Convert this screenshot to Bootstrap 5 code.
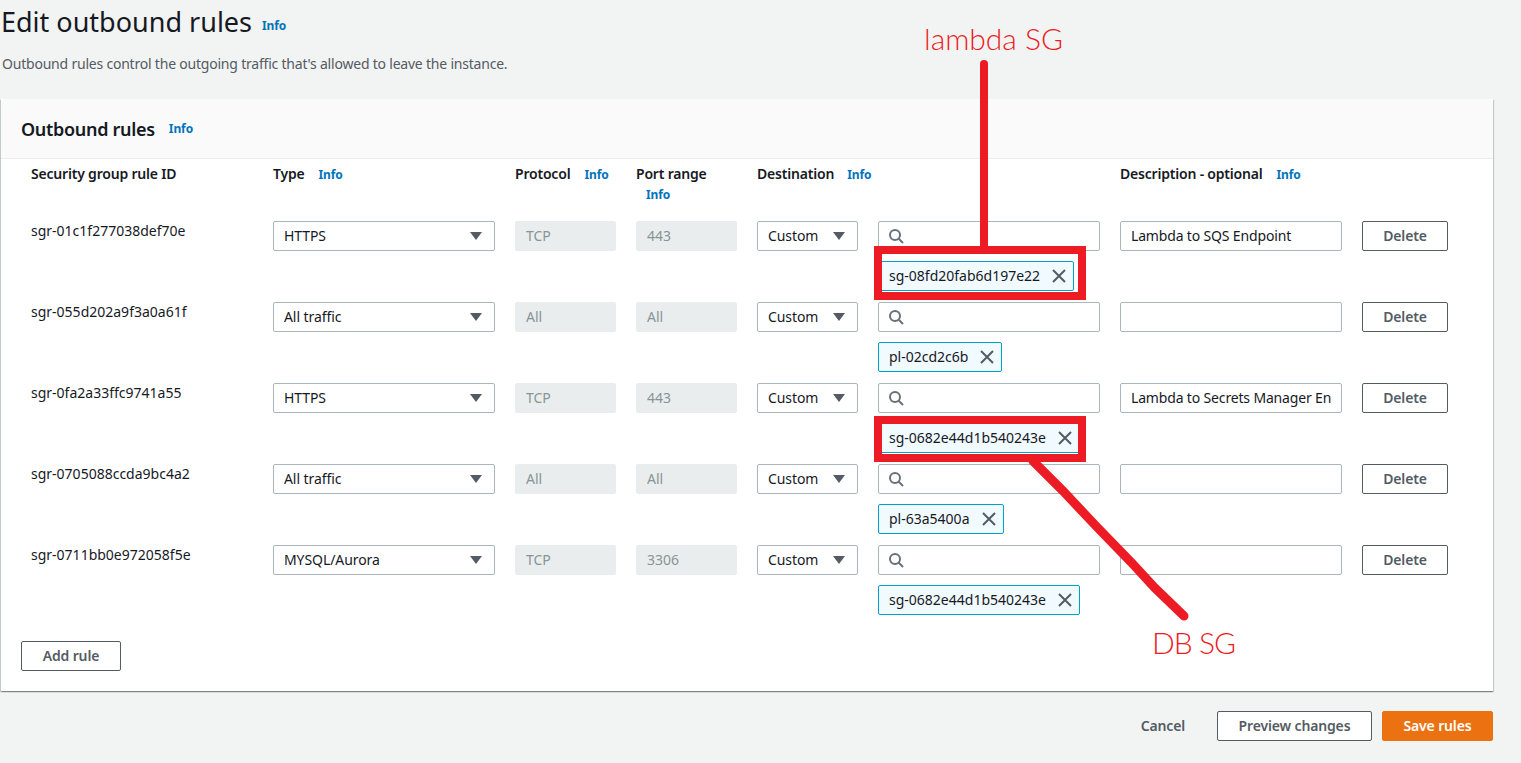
<!doctype html>
<html lang="en">
<head>
  <meta charset="utf-8">
  <meta name="viewport" content="width=device-width, initial-scale=1">
  <title>Edit outbound rules</title>
  <link href="https://cdn.jsdelivr.net/npm/bootstrap@5.3.2/dist/css/bootstrap.min.css" rel="stylesheet">
  <style>
    body { background:#f2f3f3; color:#16191f; font-family:"Noto Sans", sans-serif; font-size:14px; line-height:22px; height:763px; overflow:hidden; }
    .page-title { font-size:27px; line-height:36px; font-weight:400; margin:0; }
    .info-link { color:#0073bb; font-size:12px; font-weight:700; letter-spacing:-.1px; text-decoration:none; margin-left:14px; }
    .info-tight { margin-left:13px; }
    .info-title { margin-left:10px; }
    .info-under { display:block; line-height:20px; margin-left:10px; }
    .page-head { padding:4px 0 0 1px; height:99px; }
    .page-sub { color:#545b64; margin:13px 0 0 1px; letter-spacing:-.21px; }
    .rules-card { width:1492px; height:592px; margin-left:1px; background:#fff; border:0; border-radius:0; box-shadow:0 1px 1px 0 rgba(0,28,36,.3), 1px 1px 1px 0 rgba(0,28,36,.15), -1px 1px 1px 0 rgba(0,28,36,.15); }
    .rules-head { height:60px; padding:0 20px; background:#fafafa; border-bottom:1px solid #eaeded; border-radius:0; }
    .rules-head h2 { font-size:18px; font-weight:600; letter-spacing:-.3px; line-height:22px; margin:0; }
    .rule-grid { display:grid; grid-template-columns:222px 222px 101px 101px 101px 222px 222px 86px; column-gap:20px; padding-left:30px; }
    .head-grid { height:62px; padding-top:4px; }
    .col-label { font-weight:600; letter-spacing:-.2px; }
    .rule-row { height:81px; }
    .rule-id span { display:block; margin-top:-1px; }
    .aws-input, .aws-select { height:30px; border:1px solid #aab7b8; border-radius:2px; padding:0 10px; font-size:14px; line-height:22px; color:#16191f; background-color:#fff; box-shadow:none; }
    .aws-input { padding-bottom:2px; letter-spacing:-.16px; }
    .aws-select { letter-spacing:-.08px; background-image:url("data:image/svg+xml,%3csvg xmlns='http://www.w3.org/2000/svg' viewBox='0 0 12 8'%3e%3cpath fill='%23545b64' d='M0 0h12L6 8z'/%3e%3c/svg%3e"); background-size:12px 8px; background-position:right 12px center; }
    .aws-input:disabled { background:#eaeded; border-color:#eaeded; color:#879596; opacity:1; letter-spacing:0; }
    .search-box { position:relative; }
    .search-box svg { position:absolute; left:10px; top:7px; }
    .search-box .aws-input { padding-left:34px; }
    .sg-chip { display:inline-flex; align-items:center; height:30px; margin-top:10px; padding:0 6px 0 10px; background:#f1faff; border:1px solid #00a1c9; border-radius:2px; }
    .sg-chip svg { margin-left:11px; }
    .aws-btn { height:30px; padding:0; border:1px solid #545b64; border-radius:2px; background:#fff; color:#545b64; font-size:14px; font-weight:600; letter-spacing:-.15px; line-height:22px; }
    .add-btn { width:100px; margin:0 0 0 20px; }
    .rules-list { height:420px; }
    .foot-bar { padding:20px 28px 0 0; }
    .cancel-btn { color:#545b64; font-weight:600; letter-spacing:-.15px; margin-right:32px; }
    .preview-btn { width:155px; margin-right:10px; }
    .save-btn { width:111px; background:#ec7211; border-color:#ec7211; color:#fff; }
    .notes-layer { position:absolute; left:0; top:0; pointer-events:none; }
    .notes-layer text { fill:#ed1c24; font-family:"Lato", sans-serif; font-size:30px; font-weight:300; }
    .notes-layer .note-db { letter-spacing:-1px; }
  </style>
</head>
<body>
  <div class="page-head">
    <div class="d-flex align-items-center">
      <h1 class="page-title">Edit outbound rules</h1>
      <a class="info-link info-title mt-2" href="#">Info</a>
    </div>
    <p class="page-sub">Outbound rules control the outgoing traffic that's allowed to leave the instance.</p>
  </div>

  <div class="card rules-card">
    <div class="card-header rules-head d-flex align-items-center">
      <h2>Outbound rules</h2>
      <a class="info-link" href="#">Info</a>
    </div>
    <div class="rule-grid head-grid">
      <div class="col-label">Security group rule ID</div>
      <div><span class="col-label">Type</span><a class="info-link" href="#">Info</a></div>
      <div class="text-nowrap"><span class="col-label">Protocol</span><a class="info-link" href="#">Info</a></div>
      <div><span class="col-label">Port range</span><a class="info-link info-under" href="#">Info</a></div>
      <div class="text-nowrap"><span class="col-label">Destination</span><a class="info-link info-tight" href="#">Info</a></div>
      <div></div>
      <div><span class="col-label">Description - optional</span><a class="info-link" href="#">Info</a></div>
      <div></div>
    </div>
    <div class="rules-list" id="rulesList"></div>
    <div><button type="button" class="aws-btn add-btn">Add rule</button></div>
  </div>

  <div class="foot-bar d-flex justify-content-end align-items-center">
    <span class="cancel-btn">Cancel</span>
    <button type="button" class="aws-btn preview-btn">Preview changes</button>
    <button type="button" class="aws-btn save-btn">Save rules</button>
  </div>

  <!-- red notes drawn on top of the screenshot -->
  <svg class="notes-layer" width="1521" height="763" viewBox="0 0 1521 763">
    <text x="924" y="50">lambda SG</text>
    <text class="note-db" x="1152" y="654">DB SG</text>
    <path d="M984 64V246" stroke="#ed1c24" stroke-width="8" stroke-linecap="round" fill="none"/>
    <rect x="878" y="250" width="204" height="46" stroke="#ed1c24" stroke-width="8" fill="none"/>
    <rect x="878" y="420" width="204" height="38" stroke="#ed1c24" stroke-width="8" fill="none"/>
    <path d="M1033 461L1063 491L1096 526L1131 562L1155 588L1184 616" stroke="#ed1c24" stroke-width="9" stroke-linecap="round" fill="none"/>
  </svg>

  <script src="https://cdn.jsdelivr.net/npm/bootstrap@5.3.2/dist/js/bootstrap.bundle.min.js"></script>
  <script>
    const rules = [
      { id:'sgr-01c1f277038def70e', type:'HTTPS', proto:'TCP', port:'443', chip:'sg-08fd20fab6d197e22', desc:'Lambda to SQS Endpoint' },
      { id:'sgr-055d202a9f3a0a61f', type:'All traffic', proto:'All', port:'All', chip:'pl-02cd2c6b', desc:'' },
      { id:'sgr-0fa2a33ffc9741a55', type:'HTTPS', proto:'TCP', port:'443', chip:'sg-0682e44d1b540243e', desc:'Lambda to Secrets Manager Endpoint' },
      { id:'sgr-0705088ccda9bc4a2', type:'All traffic', proto:'All', port:'All', chip:'pl-63a5400a', desc:'' },
      { id:'sgr-0711bb0e972058f5e', type:'MYSQL/Aurora', proto:'TCP', port:'3306', chip:'sg-0682e44d1b540243e', desc:'' }
    ];
    const searchIcon = '<svg width="16" height="16" viewBox="0 0 16 16" fill="none" stroke="#687078" stroke-width="2"><circle cx="7" cy="7" r="5"/><path d="M10.5 10.5L15 15"/></svg>';
    const closeIcon = '<svg width="16" height="16" viewBox="0 0 16 16" fill="none" stroke="#545b64" stroke-width="2"><path d="M2 2L14 14M14 2L2 14"/></svg>';
    document.getElementById('rulesList').innerHTML = rules.map(r => `
      <div class="rule-grid rule-row">
        <div class="rule-id"><span>${r.id}</span></div>
        <div><select class="form-select aws-select"><option>${r.type}</option></select></div>
        <div><input class="form-control aws-input" disabled value="${r.proto}"></div>
        <div><input class="form-control aws-input" disabled value="${r.port}"></div>
        <div><select class="form-select aws-select"><option>Custom</option></select></div>
        <div>
          <div class="search-box">${searchIcon}<input class="form-control aws-input"></div>
          <div class="sg-chip"><span>${r.chip}</span>${closeIcon}</div>
        </div>
        <div><input class="form-control aws-input" value="${r.desc}"></div>
        <div><button type="button" class="aws-btn w-100">Delete</button></div>
      </div>`).join('');
  </script>
</body>
</html>
